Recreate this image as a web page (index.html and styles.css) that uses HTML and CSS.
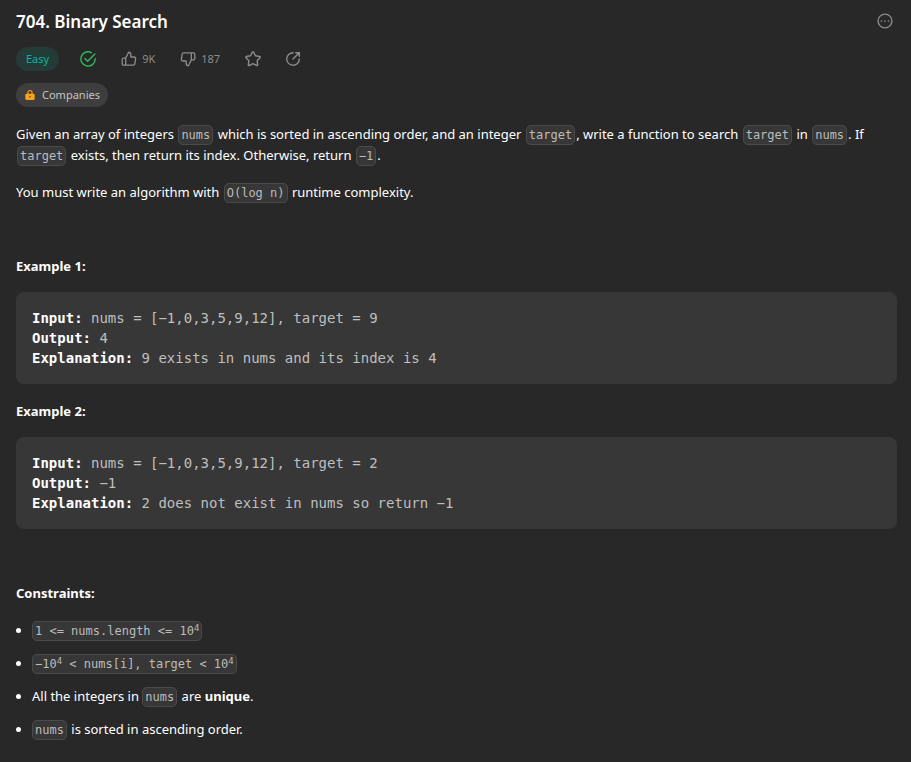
FILE: index.html
```html
<!DOCTYPE html>
<html lang="en">
<head>
<meta charset="utf-8">
<meta name="viewport" content="width=device-width, initial-scale=1">
<title>704. Binary Search</title>
<link rel="stylesheet" href="styles.css">
</head>
<body>
<main class="problem">
  <header class="header">
    <div class="title-row">
      <h1 class="title">704. Binary Search</h1>
      <button class="icon-button" type="button" aria-label="More">
        <svg class="icon" viewBox="0 0 18 18"><circle cx="9" cy="9" r="6.9"/><path class="dots" d="M5.5 9h.01M9 9h.01M12.5 9h.01"/></svg>
      </button>
    </div>
    <div class="meta">
      <span class="difficulty">Easy</span>
      <svg class="icon solved" viewBox="0 0 18 18" role="img" aria-label="Solved"><path d="M12.4 2.6A7.2 7.2 0 1 0 16.2 8.8M5.9 8.4l2.8 2.8 7.2-7.1"/></svg>
      <button class="icon-button vote" type="button">
        <svg class="icon" viewBox="-.5 -.5 19 19"><path d="M5.5 8.1 8.600 1.900c1.300 0 2.300 1 2.300 2.300v2.700h3.600c.9 0 1.600.8 1.500 1.700l-.9 5.600c-.1.8-.7 1.300-1.500 1.300H3.200c-.8 0-1.400-.6-1.400-1.400V9.500c0-.8.6-1.400 1.400-1.400zM5.500 8.100v7.400"/></svg>
        <span>9K</span>
      </button>
      <button class="icon-button vote down" type="button">
        <svg class="icon" viewBox="-.5 -.5 19 19"><path d="M12.500 9.900 9.400 16.100c-1.300 0-2.300-1-2.300-2.300v-2.700H3.500c-.9 0-1.600-.8-1.500-1.700l.9-5.600c.1-.8.7-1.300 1.500-1.300h10.400c.8 0 1.400.6 1.400 1.400v4.600c0 .8-.6 1.400-1.400 1.400zM12.500 9.900V2.500"/></svg>
        <span>187</span>
      </button>
      <button class="icon-button star" type="button" aria-label="Add to list">
        <svg class="icon" viewBox="0 0 18 18"><path d="M8.400 2.100c.3-.5.9-.5 1.200 0l1.900 3.700 4.100.7c.6.1.8.8.4 1.200l-2.900 3 .6 4.100c.1.6-.5 1-1 .7L9 13.700l-3.700 1.800c-.5.3-1.100-.1-1-.7l.6-4.100-2.900-3c-.4-.4-.2-1.100.4-1.200l4.100-.7z"/></svg>
      </button>
      <button class="icon-button share" type="button" aria-label="Share">
        <svg class="icon" viewBox="0 0 18 18"><path d="M9.200 2.700A6.300 6.300 0 1 0 15.300 9M11.800 2.700h3.500v3.500M15.200 2.800 9 9"/></svg>
      </button>
    </div>
    <button class="companies" type="button">
      <svg class="lock" viewBox="0 0 12 12"><path d="M4 5.500V3.500a2 2 0 0 1 4 0V5.500" fill="none" stroke="currentColor" stroke-width="1.2"/><path fill="currentColor" fill-rule="evenodd" d="M2.700 4.800h6.600c.8 0 1.400.6 1.400 1.400v3.400c0 .8-.6 1.400-1.400 1.400H2.700c-.8 0-1.400-.6-1.400-1.400V6.200c0-.8.6-1.400 1.400-1.400zM6 7a.8.8 0 1 0 0 1.600.8.8 0 0 0 0-1.600z"/></svg>
      <span>Companies</span>
    </button>
  </header>

  <article class="description">
    <p>Given an array of integers <code>nums</code> which is sorted in ascending order, and an integer <code>target</code>, write a function to search <code>target</code> in <code>nums</code>. If <code>target</code> exists, then return its index. Otherwise, return <code>−1</code>.</p>
    <p>You must write an algorithm with <code>O(log n)</code> runtime complexity.</p>
    <p>&nbsp;</p>
    <p><strong>Example 1:</strong></p>
<pre><strong>Input:</strong> nums = [−1,0,3,5,9,12], target = 9
<strong>Output:</strong> 4
<strong>Explanation:</strong> 9 exists in nums and its index is 4
</pre>
    <p><strong>Example 2:</strong></p>
<pre><strong>Input:</strong> nums = [−1,0,3,5,9,12], target = 2
<strong>Output:</strong> −1
<strong>Explanation:</strong> 2 does not exist in nums so return −1
</pre>
    <p>&nbsp;</p>
    <p><strong>Constraints:</strong></p>
    <ul>
      <li><code>1 &lt;= nums.length &lt;= 10<sup>4</sup></code></li>
      <li><code>−10<sup>4</sup> &lt; nums[i], target &lt; 10<sup>4</sup></code></li>
      <li>All the integers in <code>nums</code> are <strong>unique</strong>.</li>
      <li><code>nums</code> is sorted in ascending order.</li>
    </ul>
  </article>
</main>
</body>
</html>
```
FILE: styles.css
```css
* {
  box-sizing: border-box;
}

body {
  margin: 0;
  background: #282828;
  color: #fff;
  font: 13px/21px "Noto Sans", sans-serif;
}

.problem {
  padding: 9px 14px 16px 16px;
}

.header {
  display: flex;
  flex-direction: column;
  align-items: flex-start;
  gap: 12px;
}

.title-row {
  display: flex;
  align-self: stretch;
  align-items: flex-start;
  justify-content: space-between;
  padding-right: 3px;
}

.title {
  margin: 0;
  font-size: 17px;
  font-weight: 600;
  line-height: 26px;
}

.meta {
  display: flex;
  align-items: center;
  color: #8c8c8c;
}

.difficulty {
  padding: 0 10px;
  border-radius: 12px;
  background: #253b38;
  color: #00b8a3;
  font-size: 11px;
  line-height: 24px;
}

.icon-button {
  display: flex;
  align-items: center;
  padding: 0;
  border: 0;
  background: none;
  color: #8c8c8c;
  font: 11px/24px "Noto Sans", sans-serif;
}

.title-row .icon-button {
  height: 24px;
}

.icon {
  display: block;
  width: 18px;
  height: 18px;
  fill: none;
  stroke: currentColor;
  stroke-width: 1.4;
  stroke-linecap: round;
  stroke-linejoin: round;
}

.dots {
  stroke-width: 1.7;
}

.solved {
  margin-left: 20px;
  color: #2cbb5d;
}

.vote {
  gap: 4px;
  margin-left: 23px;
}

.down,
.star {
  margin-left: 24px;
}

.share {
  margin-left: 22px;
}

.companies {
  display: flex;
  align-items: center;
  gap: 6px;
  padding: 0 8px;
  border: 0;
  border-radius: 12px;
  background: #3e3e3e;
  color: #c4c4c4;
  font: 11px/24px "Noto Sans", sans-serif;
}

.lock {
  width: 12px;
  height: 12px;
  color: #ffa116;
}

.description {
  padding-top: 17px;
}

p {
  margin: 0 0 16px;
}

strong {
  font-weight: 700;
}

code,
pre {
  font-family: "DejaVu Sans Mono", monospace;
}

code {
  margin: 0 1px;
  padding: 2px;
  border: 1px solid #4a4a4a;
  border-radius: 5px;
  background: #373737;
  color: #bcbcbc;
  font-size: 12px;
  line-height: 14px;
}

pre {
  margin: -1px 0 17px;
  padding: 16px;
  border-radius: 8px;
  background: #373737;
  color: #bfbfbf;
  font-size: 14px;
  line-height: 20px;
  white-space: pre-wrap;
}

pre strong {
  color: #fff;
}

ul {
  margin: 0;
  padding-left: 16px;
}

li {
  margin-bottom: 12px;
}

li > code:first-child {
  margin-left: 0;
}

sup {
  position: relative;
  top: -4px;
  font-size: 9px;
  line-height: 0;
  vertical-align: baseline;
}
```
